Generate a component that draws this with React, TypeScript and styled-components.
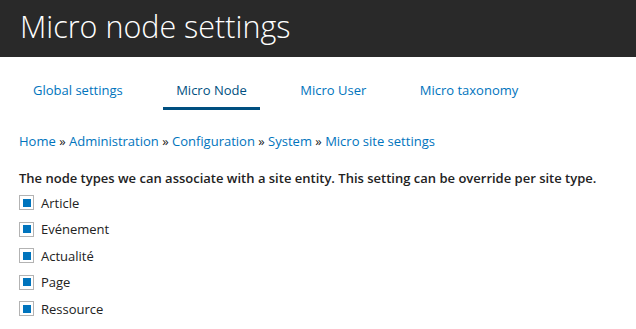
import React from "react";
import styled, { createGlobalStyle } from "styled-components";

const Global = createGlobalStyle`
  html, body { margin: 0; padding: 0; background: #fff; }
  body { font-family: "Open Sans", "Noto Sans", sans-serif; color: #222; }
`;

const Header = styled.header`
  background: #292929;
  height: 57px;
  padding: 0 20px;
  display: flex;
  align-items: center;
`;

const Title = styled.h1`
  margin: 0;
  font-weight: 300;
  font-size: 30.5px;
  color: #fff;
  line-height: 1;
  margin-top: -4px;
`;

const Tabs = styled.nav`
  display: flex;
  padding: 18px 0 0 20px;
`;

const Tab = styled.a<{ $active?: boolean }>`
  display: block;
  font-size: 13px;
  padding: 6px 13px 8px;
  text-decoration: none;
  color: ${(p) => (p.$active ? "#004f80" : "#0074bd")};
  border-bottom: 3px solid ${(p) => (p.$active ? "#004f80" : "transparent")};
  margin-right: 27.5px;
`;

const Main = styled.main`
  padding: 0 19px;
`;

const Breadcrumb = styled.div`
  font-size: 13px;
  margin-top: 22px;
  color: #222;
  a { color: #0074bd; text-decoration: none; }
`;

const Description = styled.p`
  font-size: 13px;
  font-weight: 600;
  margin: 19px 0 7px;
  color: #222;
`;

const List = styled.div`
  display: flex;
  flex-direction: column;
  gap: 9.5px;
`;

const Row = styled.label`
  display: flex;
  align-items: center;
  gap: 7px;
  font-size: 13px;
  color: #222;
  height: 17px;
`;

const Box = styled.span`
  box-sizing: border-box;
  width: 15px;
  height: 15px;
  border: 1px solid #b3b3b3;
  display: flex;
  align-items: center;
  justify-content: center;
  &::after {
    content: "";
    width: 8px;
    height: 8px;
    background: #0074bd;
  }
`;

const items = ["Article", "Evénement", "Actualité", "Page", "Ressource"];
const crumbs = ["Home", "Administration", "Configuration", "System", "Micro site settings"];

export default function App() {
  return (
    <>
      <Global />
      <Header>
        <Title>Micro node settings</Title>
      </Header>
      <Tabs>
        <Tab href="#">Global settings</Tab>
        <Tab href="#" $active>Micro Node</Tab>
        <Tab href="#">Micro User</Tab>
        <Tab href="#">Micro taxonomy</Tab>
      </Tabs>
      <Main>
        <Breadcrumb>
          {crumbs.map((c, i) => (
            <React.Fragment key={c}>
              {i > 0 && " » "}
              <a href="#">{c}</a>
            </React.Fragment>
          ))}
        </Breadcrumb>
        <Description>
          The node types we can associate with a site entity. This setting can be override per site type.
        </Description>
        <List>
          {items.map((it) => (
            <Row key={it}>
              <Box />
              {it}
            </Row>
          ))}
        </List>
      </Main>
    </>
  );
}
